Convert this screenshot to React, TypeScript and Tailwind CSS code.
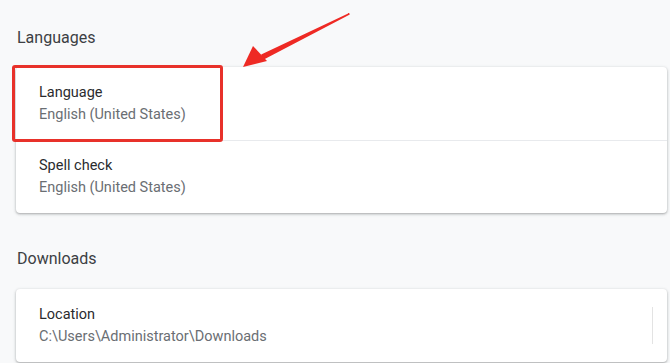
import React from 'react';

interface SettingRowProps {
  label: string;
  value: string;
  divider?: boolean;
  action?: boolean;
}

function SettingRow({ label, value, divider = false, action = false }: SettingRowProps) {
  return (
    <div
      className={`flex h-[73px] items-center pl-[23px] pr-[14px] ${
        divider ? 'border-t border-[#e8eaed]' : ''
      }`}
    >
      <div className="flex flex-1 flex-col">
        <span className="text-[14.5px] leading-[22px] text-[#2a2b2e]">{label}</span>
        <span className="text-[14.5px] leading-[22px] text-[#6a6e73]">{value}</span>
      </div>
      {action && <div className="h-[37px] w-px bg-[#e3e3e3]" />}
    </div>
  );
}

function SectionTitle({ children }: { children: React.ReactNode }) {
  return (
    <h2 className="pl-[17px] text-[16px] font-normal leading-[18px] text-[#3c4043]">
      {children}
    </h2>
  );
}

export default function App() {
  return (
    <div
      className="relative h-[363px] w-[670px] overflow-hidden bg-[#f8f9fa] pt-[29px]"
      style={{ fontFamily: 'Roboto, "Liberation Sans", sans-serif' }}
    >
      <SectionTitle>Languages</SectionTitle>
      <div className="ml-[16px] mt-[20px] w-[651px] rounded-[4px] bg-white shadow-[0_1px_2px_rgba(60,64,67,0.3),0_1px_3px_1px_rgba(60,64,67,0.12)]">
        <SettingRow label="Language" value="English (United States)" />
        <SettingRow label="Spell check" value="English (United States)" divider />
      </div>

      <div className="mt-[37px]">
        <SectionTitle>Downloads</SectionTitle>
      </div>
      <div className="ml-[16px] mt-[21px] w-[651px] rounded-[4px] bg-white shadow-[0_1px_2px_rgba(60,64,67,0.3),0_1px_3px_1px_rgba(60,64,67,0.12)]">
        <SettingRow label="Location" value="C:\Users\Administrator\Downloads" action />
      </div>

      {/* annotation: highlight box */}
      <div className="absolute left-[12px] top-[65px] h-[77px] w-[211px] rounded-[3px] border-[3px] border-[#e8312a]" />

      {/* annotation: arrow */}
      <svg
        className="absolute left-0 top-0"
        width="670"
        height="363"
        viewBox="0 0 670 363"
        fill="none"
      >
        <path d="M349 14 L262 55 L263 59 Z" fill="#ee2a24" stroke="#ee2a24" strokeWidth="1.5" strokeLinejoin="round" />
        <path d="M243 67 L253 46 L267 61 Z" fill="#ee2a24" />
      </svg>
    </div>
  );
}
